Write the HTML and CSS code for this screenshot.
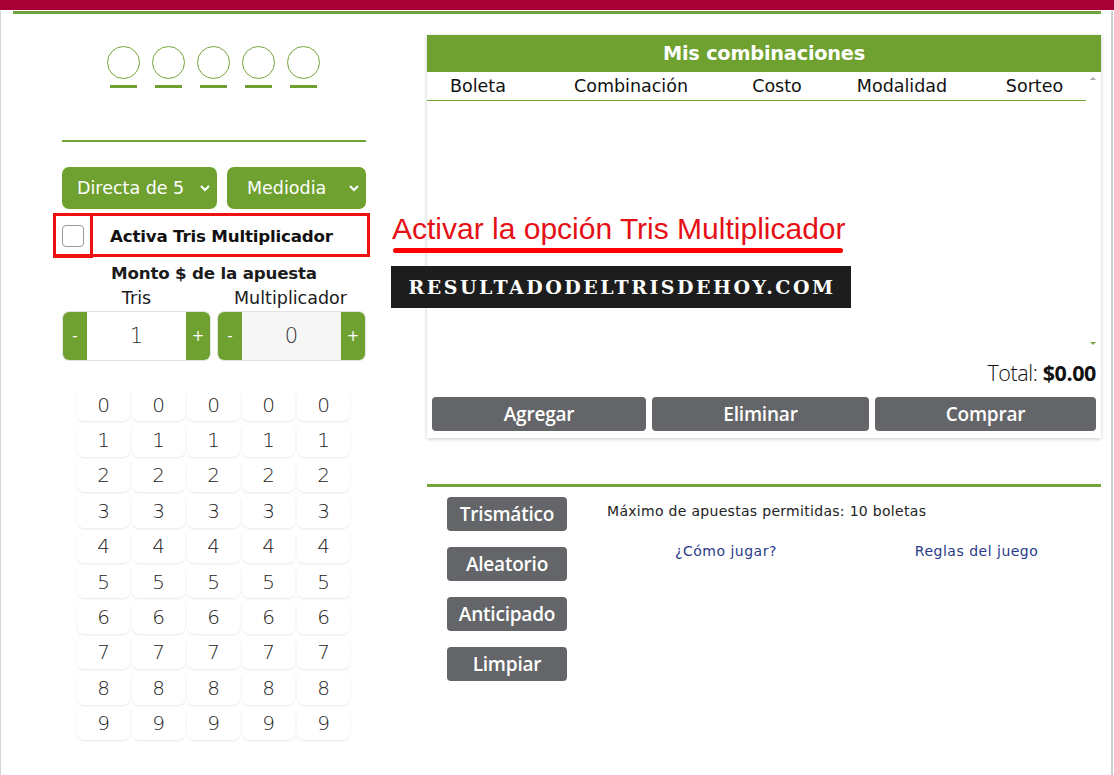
FILE: index.html
```html
<!DOCTYPE html>
<html lang="es">
<head>
<meta charset="utf-8">
<title>Tris</title>
<link rel="stylesheet" href="styles.css">
</head>
<body>
<div class="topbar"></div>
<div class="frame">
  <div class="greenline"></div>
  <div class="main">
    <div class="left">
      <div class="balls">
        <div class="ball-wrap"><div class="ball"></div><div class="ball-line"></div></div>
        <div class="ball-wrap"><div class="ball"></div><div class="ball-line"></div></div>
        <div class="ball-wrap"><div class="ball"></div><div class="ball-line"></div></div>
        <div class="ball-wrap"><div class="ball"></div><div class="ball-line"></div></div>
        <div class="ball-wrap"><div class="ball"></div><div class="ball-line"></div></div>
      </div>
      <div class="rule"></div>
      <div class="selects">
        <div class="select sel1"><span>Directa de 5</span><svg width="12" height="8" viewBox="0 0 12 8"><path d="M2 2l4 4 4-4" fill="none" stroke="#fff" stroke-width="2"/></svg></div>
        <div class="select sel2"><span>Mediodia</span><svg width="12" height="8" viewBox="0 0 12 8"><path d="M2 2l4 4 4-4" fill="none" stroke="#fff" stroke-width="2"/></svg></div>
      </div>
      <div class="check-row">
        <div class="checkbox"></div>
        <div class="check-label">Activa Tris Multiplicador</div>
      </div>
      <div class="monto">Monto $ de la apuesta</div>
      <div class="labels"><span class="lab1">Tris</span><span class="lab2">Multiplicador</span></div>
      <div class="inputs">
        <div class="stepper st1"><div class="sbtn">-</div><div class="sval">1</div><div class="sbtn">+</div></div>
        <div class="stepper st2"><div class="sbtn">-</div><div class="sval gray">0</div><div class="sbtn">+</div></div>
      </div>
      <div class="grid">
        <div class="cell">0</div><div class="cell">0</div><div class="cell">0</div><div class="cell">0</div><div class="cell">0</div>
        <div class="cell">1</div><div class="cell">1</div><div class="cell">1</div><div class="cell">1</div><div class="cell">1</div>
        <div class="cell">2</div><div class="cell">2</div><div class="cell">2</div><div class="cell">2</div><div class="cell">2</div>
        <div class="cell">3</div><div class="cell">3</div><div class="cell">3</div><div class="cell">3</div><div class="cell">3</div>
        <div class="cell">4</div><div class="cell">4</div><div class="cell">4</div><div class="cell">4</div><div class="cell">4</div>
        <div class="cell">5</div><div class="cell">5</div><div class="cell">5</div><div class="cell">5</div><div class="cell">5</div>
        <div class="cell">6</div><div class="cell">6</div><div class="cell">6</div><div class="cell">6</div><div class="cell">6</div>
        <div class="cell">7</div><div class="cell">7</div><div class="cell">7</div><div class="cell">7</div><div class="cell">7</div>
        <div class="cell">8</div><div class="cell">8</div><div class="cell">8</div><div class="cell">8</div><div class="cell">8</div>
        <div class="cell">9</div><div class="cell">9</div><div class="cell">9</div><div class="cell">9</div><div class="cell">9</div>
      </div>
    </div>
    <div class="right">
      <div class="card">
        <div class="card-head">Mis combinaciones</div>
        <div class="table-wrap">
          <div class="table-area">
            <div class="thead">
              <div class="th c1">Boleta</div>
              <div class="th c2">Combinación</div>
              <div class="th c3">Costo</div>
              <div class="th c4">Modalidad</div>
              <div class="th c5">Sorteo</div>
            </div>
          </div>
          <div class="scrollbar">
            <div class="arrow-up"></div>
            <div class="arrow-down"></div>
          </div>
        </div>
        <div class="total"><span class="tlabel">Total:</span> <b>$0.00</b></div>
        <div class="actions">
          <div class="gbtn a1">Agregar</div>
          <div class="gbtn a2">Eliminar</div>
          <div class="gbtn a3">Comprar</div>
        </div>
      </div>
      <div class="rule2"></div>
      <div class="lower">
        <div class="side-btns">
          <div class="gbtn sb">Trismático</div>
          <div class="gbtn sb">Aleatorio</div>
          <div class="gbtn sb">Anticipado</div>
          <div class="gbtn sb">Limpiar</div>
        </div>
        <div class="info">
          <div class="maximo">Máximo de apuestas permitidas: 10 boletas</div>
          <div class="links"><span class="link l1">¿Cómo jugar?</span><span class="link l2">Reglas del juego</span></div>
        </div>
      </div>
    </div>
  </div>
  <div class="mark-box"></div>
  <div class="mark-check"></div>
  <div class="note">Activar la opción Tris Multiplicador</div>
  <div class="note-line"></div>
  <div class="banner">RESULTADODELTRISDEHOY.COM</div>
</div>
</body>
</html>
```

FILE: styles.css
```css
* { box-sizing: border-box; }
html, body { margin: 0; padding: 0; background: #fff; }
body { font-family: "DejaVu Sans", sans-serif; color: #1b1b1b; width: 1114px; height: 775px; overflow: hidden; }

.topbar { height: 10px; background: #a80036; }
.frame { position: relative; width: 1113px; height: 765px; border-left: 1px solid #d4d4d4; border-right: 2px solid #cfcfcf; }
.greenline { margin: 1px 10px 0 12px; height: 3px; background: #72a33a; }

.main { display: flex; padding-left: 61px; gap: 61px; }
.left { width: 304px; display: flex; flex-direction: column; }
.right { width: 674px; }

.balls { display: flex; justify-content: center; gap: 12px; margin-top: 32px; padding-right: 2px; }
.ball-wrap { display: flex; flex-direction: column; align-items: center; }
.ball { width: 33px; height: 33px; border: 1.5px solid #76a53c; border-radius: 50%; }
.ball-line { width: 27px; height: 3px; background: #6fa032; margin-top: 6px; }

.rule { height: 2px; background: #72a33a; margin-top: 52px; }

.selects { display: flex; gap: 10px; margin-top: 25px; }
.select { height: 42px; background: #6ea12f; border-radius: 7px; color: #fff; font-size: 17.5px; display: flex; align-items: center; justify-content: space-between; padding: 0 6px 0 15px; }
.sel1 { width: 155px; }
.sel2 { width: 139px; padding-left: 20px; }

.check-row { height: 43px; display: flex; align-items: center; margin-top: 5px; }
.checkbox { width: 22px; height: 22px; border: 1px solid #9a9a9a; border-radius: 4px; background: #fff; }
.check-label { font-weight: bold; font-size: 16.7px; margin-left: 26px; color: #111; letter-spacing: -0.2px; }

.monto { font-weight: bold; font-size: 16.7px; text-align: center; margin-top: 6px; line-height: 20px; letter-spacing: -0.2px; }
.labels { display: flex; font-size: 17.5px; line-height: 22px; margin-top: 4px; }
.lab1 { width: 149px; text-align: center; }
.lab2 { flex: 1; text-align: center; padding-left: 4px; }

.inputs { display: flex; gap: 6px; margin-top: 2px; }
.stepper { height: 50px; display: flex; border: 1px solid #e2e2e2; border-radius: 7px; overflow: hidden; }
.st1 { width: 149px; }
.st2 { width: 149px; }
.sbtn { width: 24px; background: #6ea12f; color: #fff; font-size: 15px; display: flex; align-items: center; justify-content: center; }
.sval { flex: 1; display: flex; align-items: center; justify-content: center; font-size: 21px; color: #333; font-weight: 300; background: #fff; }
.sval.gray { background: #f6f6f6; }

.grid { display: grid; grid-template-columns: repeat(5, 53px); grid-auto-rows: 33.4px; gap: 2px; margin: 27px 0 0 15px; }
.cell { border-radius: 7px; box-shadow: 0 1px 2px rgba(0,0,0,0.09); display: flex; align-items: center; justify-content: center; font-size: 20px; color: #222; font-weight: 300; }

.card { margin-top: 21px; height: 403px; box-shadow: 0 1px 4px rgba(0,0,0,0.22); display: flex; flex-direction: column; }
.card-head { height: 37px; background: #6ea12f; color: #fff; font-weight: bold; font-size: 19.3px; display: flex; align-items: center; justify-content: center; letter-spacing: -0.2px; }
.table-wrap { display: flex; height: 280px; }
.table-area { flex: 1; }
.thead { display: flex; height: 29px; border-bottom: 1.5px solid #72a33a; }
.th { font-size: 17.5px; display: flex; align-items: center; justify-content: center; color: #111; }
.c1 { width: 102px; } .c2 { width: 204px; } .c3 { width: 88px; } .c4 { width: 162px; } .c5 { width: 103px; }
.scrollbar { width: 15px; position: relative; }
.arrow-up { position: absolute; left: 4px; top: 5px; width: 0; height: 0; border-left: 3px solid transparent; border-right: 3px solid transparent; border-bottom: 3px solid #a8a8a8; }
.arrow-down { position: absolute; left: 4px; top: 270px; width: 0; height: 0; border-left: 3px solid transparent; border-right: 3px solid transparent; border-top: 3px solid #7aa646; }

.total { font-family: "Open Sans", sans-serif; font-size: 21.5px; text-align: right; padding-right: 5px; margin-top: 8px; line-height: 25px; color: #111; letter-spacing: -0.4px; }
.tlabel { font-weight: 300; }
.total b { font-weight: 700; }

.actions { display: flex; gap: 6px; padding: 0 5px; margin-top: 12px; }
.gbtn { height: 34px; background: #646568; color: #fff; border-radius: 4px; font-family: "Open Sans", sans-serif; font-weight: 600; font-size: 19px; display: flex; align-items: center; justify-content: center; letter-spacing: -0.2px; }
.a1 { width: 214px; } .a2 { width: 217px; } .a3 { width: 221px; }

.rule2 { height: 3px; background: #72a33a; margin-top: 46px; }
.lower { display: flex; padding-left: 20px; margin-top: 10px; }
.side-btns { display: flex; flex-direction: column; gap: 16px; width: 120px; }
.sb { width: 120px; }
.info { margin-left: 40px; }
.maximo { font-size: 14px; line-height: 18px; margin-top: 5px; color: #222; letter-spacing: 0.3px; }
.links { display: flex; margin-top: 22px; font-size: 14px; line-height: 18px; }
.link { color: #2c3a8a; letter-spacing: 0.5px; }
.l1 { margin-left: 68px; }
.l2 { margin-left: 138px; }

.mark-box { position: absolute; left: 52px; top: 202px; width: 317px; height: 44px; border: 3px solid #ee1111; }
.mark-check { position: absolute; left: 52px; top: 202px; width: 40px; height: 45px; border: 3px solid #ee1111; }
.note { position: absolute; left: 391px; top: 203px; font-family: "Liberation Sans", sans-serif; font-size: 30px; color: #e50f15; line-height: 30px; white-space: nowrap; }
.note-line { position: absolute; left: 392px; top: 237px; width: 450px; height: 5px; background: #f00; border-radius: 3px; }
.banner { position: absolute; left: 390px; top: 255px; width: 460px; height: 42px; background: #1d1d1d; color: #fff; font-family: "DejaVu Serif", serif; font-weight: bold; font-size: 19px; display: flex; align-items: center; justify-content: center; letter-spacing: 2.5px; padding-left: 2px; }
```
